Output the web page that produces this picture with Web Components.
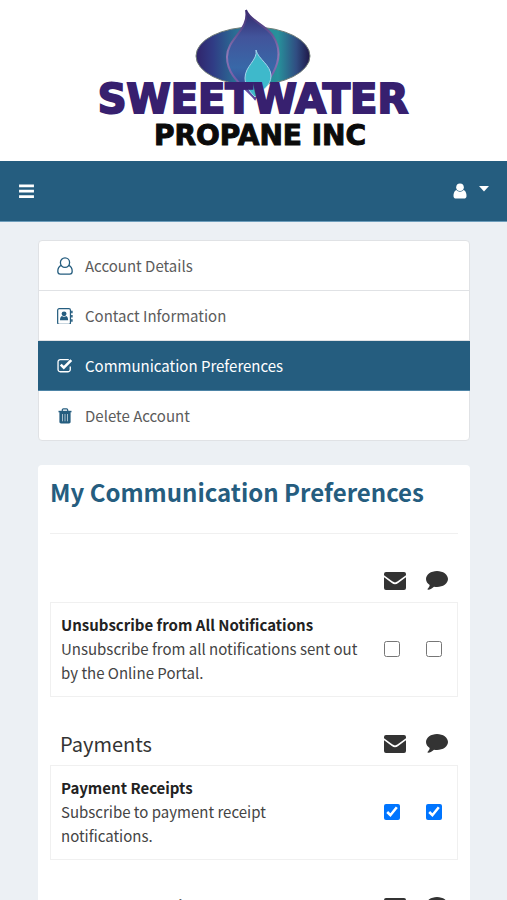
<!DOCTYPE html>
<html lang="en">
<head>
<meta charset="utf-8">
<meta name="viewport" content="width=device-width, initial-scale=1">
<title>My Communication Preferences</title>
<style>
    html {
        background: #ecf0f4;
    }

    body {
        margin: 0;
        font-family: "Noto Sans CJK SC", "Open Sans", sans-serif;
        font-size: 16px;
        line-height: 24px;
        color: #333;
        --brand: #255d7f;
    }

    main {
        padding: 18px 37px 18px 38px;
    }
</style>
</head>
<body>
<brand-logo></brand-logo>
<top-bar></top-bar>
<main>
    <side-menu>
        <menu-item icon="user-o" href="#account">Account Details</menu-item>
        <menu-item icon="contact" href="#contact">Contact Information</menu-item>
        <menu-item icon="check" href="#communication" active>Communication Preferences</menu-item>
        <menu-item icon="trash" href="#delete">Delete Account</menu-item>
    </side-menu>
    <pref-panel heading="My Communication Preferences">
        <pref-group>
            <pref-row name="Unsubscribe from All Notifications">Unsubscribe from all notifications sent out by the Online Portal.</pref-row>
        </pref-group>
        <pref-group heading="Payments">
            <pref-row name="Payment Receipts" email sms>Subscribe to payment receipt notifications.</pref-row>
        </pref-group>
        <pref-group heading="Payment and Autopay"></pref-group>
    </pref-panel>
</main>

<script>
const icons = {
    'bars': ['0 0 16 14', '<path d="M1 .5h14v2.6H1zM1 5.5h14v2.6H1zM1 10.5h14v2.6H1z"/>'],
    'user': ['0 0 14 16', '<circle cx="7" cy="4.2" r="3.8"/><path d="M3.3 7C1 8 .4 11 .5 13.2.6 14.8 1.6 15.6 3 15.6h8c1.4 0 2.4-.8 2.5-2.4C13.600 11 13 8 10.700 7a5 5 0 0 1-7.400 0z"/>'],
    'caret': ['0 0 10 12', '<path d="M0 1h10L5 6.500z"/>'],
    'user-o': ['0 0 16 18', '<g fill="none" stroke="currentColor" stroke-width="1.3"><path d="M4.300 8.400C1.800 9.500.8 11.700.8 14.300c0 1.800 1 2.900 2.600 2.900h9.200c1.600 0 2.600-1.100 2.600-2.900 0-2.600-1-4.800-3.500-5.900"/><ellipse cx="8" cy="5.600" rx="4.600" ry="4.800"/></g>'],
    'contact': ['0 0 17 18', '<rect x=".7" y=".7" width="13.600" height="16.600" rx="1.600" fill="none" stroke="currentColor" stroke-width="1.3"/><path d="M15 3h1.600v2.600H15zM15 7.500h1.600v2.600H15zM15 12h1.600v2.600H15z"/><circle cx="7.500" cy="6.200" r="2.600"/><path d="M5.400 8.400c-1.600.4-2.200 2-2.200 4.500h8.600c0-2.500-.6-4.100-2.200-4.500a3 3 0 0 1-4.200 0z"/>'],
    'check': ['0 0 17 16', '<path d="M12.500 1.700H3.400A2.300 2.300 0 0 0 1.100 4v8.300a2.300 2.300 0 0 0 2.300 2.300h8.400a2.300 2.300 0 0 0 2.300-2.300V9" fill="none" stroke="currentColor" stroke-width="1.400"/><path d="M4 7l3.200 3.200 8-8" fill="none" stroke="currentColor" stroke-width="2.800"/>'],
    'trash': ['0 0 14 16', '<path d="M.5 2.800h13v1.500h-13z"/><path d="M4.300 3V1.900c0-.7.500-1.100 1.100-1.100h3.200c.6 0 1.100.4 1.100 1.100V3" fill="none" stroke="currentColor" stroke-width="1.200"/><path d="M1.400 4h11.200v9.800c0 1-.7 1.700-1.600 1.700H3c-.9 0-1.600-.7-1.600-1.700z"/><path d="M4.500 6v7.300M7 6v7.300M9.500 6v7.300" stroke="#fff" stroke-opacity=".6"/>'],
    'mail': ['0 0 22 18', '<path d="M2 0h18a2 2 0 0 1 2 2v1.300c-2.300 1.700-6.800 4.700-8.700 6.300-1.500 1.100-3.100 1.100-4.600 0C6.800 8 2.300 5 0 3.300V2a2 2 0 0 1 2-2z"/><path d="M0 5.300c2.300 1.700 5.200 3.700 7.800 5.700 2 1.600 4.400 1.600 6.400 0 2.600-2 5.500-4 7.800-5.700V16a2 2 0 0 1-2 2H2a2 2 0 0 1-2-2z"/>'],
    'comment': ['0 0 22 19', '<path d="M11 0c6 0 11 3.600 11 8s-5 8-11 8c-1 0-2-.1-3-.3-1.700 1.600-3.600 2.700-6 3-.5 0-.7-.5-.3-.9 1-1 1.800-2 2-3.700C1.500 12.600 0 10.500 0 8c0-4.400 5-8 11-8z"/>']
};

function icon(name, width) {
    const [box, shapes] = icons[name];
    return `<svg viewBox="${box}" width="${width}" fill="currentColor" aria-hidden="true">${shapes}</svg>`;
}

class BrandLogo extends HTMLElement {
    connectedCallback() {
        this.attachShadow({mode: "open"}).innerHTML = `
        <style>
            :host {
                display: flex;
                justify-content: center;
                background: #fff;
            }
            svg {
                display: block;
                font-family: "DejaVu Sans", sans-serif;
                font-weight: bold;
            }
        </style>
        <svg width="350" height="161" viewBox="0 0 350 161" role="img" aria-label="Sweetwater Propane Inc">
            <defs>
                <linearGradient id="oval">
                    <stop offset="0" stop-color="#30246b"/>
                    <stop offset=".15" stop-color="#303c85"/>
                    <stop offset=".4" stop-color="#297b98"/>
                    <stop offset=".72" stop-color="#27919b"/>
                    <stop offset=".88" stop-color="#304d82"/>
                    <stop offset="1" stop-color="#1f1748"/>
                </linearGradient>
                <linearGradient id="flame" x1="0" y1="0" x2="0" y2="1">
                    <stop offset="0" stop-color="#322769"/>
                    <stop offset=".3" stop-color="#42549b"/>
                    <stop offset=".65" stop-color="#3868a8"/>
                    <stop offset="1" stop-color="#35368a"/>
                </linearGradient>
                <linearGradient id="edge" x1="0" y1="0" x2="0" y2="1">
                    <stop offset="0" stop-color="#392b70"/>
                    <stop offset=".5" stop-color="#8f78b6"/>
                    <stop offset="1" stop-color="#5b469c"/>
                </linearGradient>
            </defs>
            <ellipse cx="174" cy="56" rx="57" ry="29" fill="url(#oval)" stroke="#707c76"/>
            <path d="M167 10C171 21 187 25 194 36c9 14 5 28 0 37-5 9-13 17-18 26-10-12-28-22-28-42 0-19 23-27 19-47z" fill="url(#flame)" stroke="url(#edge)" stroke-width="2"/>
            <path d="M177 50c2 9 15 15 15 26 0 10-9 14-16 21-5-5-10-11-10-19 0-12 13-18 11-28z" fill="#3eb9cb" stroke="#a5d5ec"/>
            <text x="174" y="113" text-anchor="middle" font-size="40" fill="#37206f" stroke="#37206f" stroke-width="2">SWEETWATER</text>
            <text x="181" y="145" text-anchor="middle" font-size="28" fill="#0b0b0b" stroke="#0b0b0b">PROPANE INC</text>
        </svg>
        `;
    }
}

class TopBar extends HTMLElement {
    connectedCallback() {
        this.attachShadow({mode: "open"}).innerHTML = `
        <style>
            :host {
                display: flex;
                justify-content: space-between;
                align-items: center;
                height: 60px;
                padding: 0 18px;
                background: var(--brand);
                border-bottom: 1px solid #6d9dbb;
            }
            button {
                display: flex;
                align-items: center;
                gap: 12px;
                padding: 0;
                border: 0;
                background: none;
                color: #fff;
            }
        </style>
        <button aria-label="Menu">${icon('bars', 17)}</button>
        <button aria-label="Account">${icon('user', 14)}${icon('caret', 10)}</button>
        `;
    }
}

class SideMenu extends HTMLElement {
    connectedCallback() {
        this.attachShadow({mode: "open"}).innerHTML = `
        <style>
            :host {
                display: block;
                border: 1px solid #e0e2e5;
                border-radius: 4px;
                background: #fff;
            }
        </style>
        <nav><slot></slot></nav>
        `;
    }
}

class MenuItem extends HTMLElement {
    connectedCallback() {
        this.attachShadow({mode: "open"}).innerHTML = `
        <style>
            :host {
                display: block;
                border-bottom: 1px solid #e0e2e5;
            }
            :host(:last-child) {
                border-bottom: 0;
            }
            :host([active]) {
                margin: 0 -1px;
                padding: 0 1px;
                background: var(--brand);
                border-color: #4d84a6;
            }
            a {
                display: flex;
                align-items: center;
                gap: 12px;
                padding: 13px 17px 12px;
                font-size: 15px;
                color: #5c5c5c;
                text-decoration: none;
            }
            span {
                display: flex;
                justify-content: center;
                width: 17px;
                color: var(--brand);
            }
            :host([active]) a, :host([active]) span {
                color: #fff;
            }
        </style>
        <a href="${this.getAttribute("href")}">
            <span>${icon(this.getAttribute("icon"), this.getAttribute("icon") === 'trash' ? 14 : 16)}</span>
            <slot></slot>
        </a>
        `;
    }
}

class PrefPanel extends HTMLElement {
    connectedCallback() {
        this.attachShadow({mode: "open"}).innerHTML = `
        <style>
            :host {
                display: block;
                margin-top: 24px;
                padding: 9px 12px;
                border-radius: 4px;
                background: #fff;
            }
            h1 {
                margin: 0;
                padding-bottom: 23px;
                border-bottom: 1px solid #f0f0f0;
                font-size: 24px;
                line-height: 36px;
                color: var(--brand);
            }
        </style>
        <h1>${this.getAttribute("heading")}</h1>
        <slot></slot>
        `;
    }
}

class PrefGroup extends HTMLElement {
    connectedCallback() {
        const heading = this.getAttribute("heading");
        this.attachShadow({mode: "open"}).innerHTML = `
        <style>
            :host {
                display: block;
                margin-top: 23px;
            }
            header {
                display: flex;
                align-items: center;
                box-sizing: border-box;
                height: 45px;
                padding: 2px 10px 0 10px;
            }
            h2 {
                flex: 1;
                margin: 0;
                font-size: 20px;
                font-weight: normal;
            }
            .icons {
                display: flex;
                align-items: center;
                gap: 20px;
                margin-left: auto;
            }
        </style>
        <header>
            ${heading ? `<h2>${heading}</h2>` : ''}
            <div class="icons">${icon('mail', 22)}${icon('comment', 22)}</div>
        </header>
        <slot></slot>
        `;
    }
}

class PrefRow extends HTMLElement {
    connectedCallback() {
        const name = this.getAttribute("name");
        const box = (type, label) =>
            `<input type="checkbox" aria-label="${name} ${label}"${this.hasAttribute(type) ? ' checked' : ''}>`;
        this.attachShadow({mode: "open"}).innerHTML = `
        <style>
            :host {
                display: flex;
                align-items: center;
                gap: 25px;
                padding: 10px 15px 11px 10px;
                border: 1px solid #f0f0f0;
                font-size: 15px;
            }
            .text {
                flex: 1;
                color: #444;
            }
            b {
                display: block;
                color: #222;
            }
            .boxes {
                display: flex;
                gap: 26px;
            }
            input {
                width: 16px;
                height: 16px;
                margin: 0;
                accent-color: #0075ff;
            }
        </style>
        <div class="text"><b>${name}</b><slot></slot></div>
        <div class="boxes">${box('email', 'by email')}${box('sms', 'by text message')}</div>
        `;
    }
}

customElements.define('brand-logo', BrandLogo);
customElements.define('top-bar', TopBar);
customElements.define('side-menu', SideMenu);
customElements.define('menu-item', MenuItem);
customElements.define('pref-panel', PrefPanel);
customElements.define('pref-group', PrefGroup);
customElements.define('pref-row', PrefRow);
</script>
</body>
</html>
